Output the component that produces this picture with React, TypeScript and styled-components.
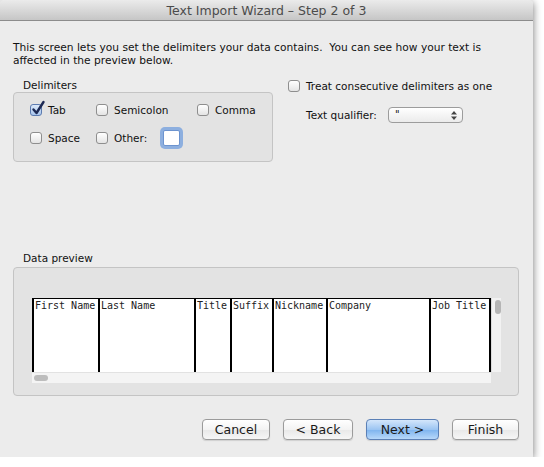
import React from 'react';
import styled, { createGlobalStyle } from 'styled-components';

const GlobalStyle = createGlobalStyle`
	html, body {
		margin: 0;
		padding: 0;
		background: #fff;
	}
	body {
		font-family: 'DejaVu Sans', 'Liberation Sans', sans-serif;
	}
`;

const Window = styled.div`
	width: 533px;
	height: 457px;
	background: #ececec;
	display: flex;
	flex-direction: column;
	box-shadow: 0 2px 9px rgba(0, 0, 0, 0.55);
	border-radius: 4px 4px 0 0;
	overflow: hidden;
`;

const TitleBar = styled.div`
	height: 20px;
	border-bottom: 1px solid #8c8c8c;
	background: linear-gradient(#ebebeb, #c6c6c6);
	display: flex;
	align-items: center;
	justify-content: center;
	font-size: 12.5px;
	color: #4b4b4b;
`;

const Body = styled.div`
	flex: 1;
	display: flex;
	flex-direction: column;
	padding: 20px 14px 17px 13px;
	font-size: 10.5px;
	color: #111;
`;

const Intro = styled.p`
	margin: 0;
	font-size: 10.65px;
	line-height: 13px;
	height: 26px;
`;

const TopRow = styled.div`
	display: flex;
	margin-top: 12px;
`;

const Group = styled.div`
	display: flex;
	flex-direction: column;
	width: 260px;
`;

const GroupLabel = styled.div`
	line-height: 13px;
	padding-left: 10px;
`;

const GroupBox = styled.div<{ $height: number }>`
	height: ${(p) => p.$height}px;
	box-sizing: border-box;
	background: #e3e3e3;
	border: 1px solid #c4c4c4;
	border-radius: 4px;
`;

const DelimiterGrid = styled.div`
	display: grid;
	grid-template-columns: 66px 101px auto;
	grid-template-rows: 22px 22px;
	row-gap: 6px;
	padding: 6px 0 0 16px;
`;

const Option = styled.label`
	display: flex;
	align-items: center;
	gap: 6px;
	white-space: nowrap;
`;

const Box = styled.span<{ $checked?: boolean }>`
	position: relative;
	width: 12px;
	height: 12px;
	box-sizing: border-box;
	flex: none;
	border: 1px solid ${(p) => (p.$checked ? '#5c7bb0' : '#8e8e8e')};
	border-radius: 3px;
	background: ${(p) =>
		p.$checked
			? 'linear-gradient(#dbe8f8, #a8c6ee)'
			: 'linear-gradient(#ffffff, #e4e4e4)'};
`;

const Tick = styled.svg`
	position: absolute;
	left: 0;
	top: -4px;
	width: 14px;
	height: 15px;
	overflow: visible;
`;

const OtherField = styled.span`
	width: 17px;
	height: 16px;
	box-sizing: border-box;
	margin-left: 10px;
	background: #fff;
	border: 1px solid #6d94cf;
	border-radius: 2px;
	box-shadow: 0 0 0 3px rgba(112, 158, 222, 0.75);
`;

const Options = styled.div`
	display: flex;
	flex-direction: column;
	padding: 1px 0 0 15px;
`;

const QualifierRow = styled.div`
	display: flex;
	align-items: center;
	gap: 11px;
	margin-top: 15px;
	padding-left: 18px;
`;

const Select = styled.div`
	width: 75px;
	height: 16px;
	box-sizing: border-box;
	border: 1px solid #9c9c9c;
	border-radius: 4px;
	background: linear-gradient(#ffffff, #ebebeb);
	display: flex;
	align-items: center;
	justify-content: space-between;
	padding: 0 5px 0 6px;
	font-size: 10px;
	line-height: 1;
`;

const Arrows = styled.svg`
	width: 6px;
	height: 9px;
`;

const PreviewLabel = styled(GroupLabel)`
	margin-top: 90px;
	margin-bottom: 2px;
`;

const PreviewBox = styled(GroupBox)`
	padding: 30px 0 0 18px;
`;

const Scroller = styled.div`
	display: grid;
	grid-template-columns: 459px 10px;
	grid-template-rows: 74px 11px;
`;

const Table = styled.div`
	display: flex;
	background: #fff;
	border-top: 1px solid #000;
	border-right: 2px solid #000;
	font-family: 'DejaVu Sans Mono', 'Liberation Mono', monospace;
	font-size: 10px;
	color: #222;
`;

const Column = styled.div<{ $width: number }>`
	width: ${(p) => p.$width}px;
	box-sizing: border-box;
	border-left: 2px solid #000;
	padding: 1px 0 0 1px;
	white-space: nowrap;
	overflow: hidden;
	line-height: 12px;
`;

const VScroll = styled.div`
	background: #f2f2f2;
	border-left: 1px solid #dcdcdc;
	padding: 2px 0 0 3px;
`;

const VThumb = styled.div`
	width: 6px;
	height: 14px;
	border-radius: 3px;
	background: #b5b5b5;
`;

const HScroll = styled.div`
	background: #f4f4f4;
	border-top: 1px solid #e2e2e2;
	padding: 2px 0 0 2px;
`;

const HThumb = styled.div`
	width: 14px;
	height: 6px;
	border-radius: 3px;
	background: #bdbdbd;
`;

const ButtonRow = styled.div`
	display: flex;
	justify-content: flex-end;
	gap: 13px;
	margin-top: 23px;
`;

const Button = styled.button<{ $width: number; $primary?: boolean }>`
	width: ${(p) => p.$width}px;
	height: 21px;
	padding: 0;
	border-radius: 4px;
	border: 1px solid ${(p) => (p.$primary ? '#5b80b6' : '#9b9b9b')};
	background: ${(p) =>
		p.$primary
			? 'linear-gradient(#d4e6fb, #9cc5f2 50%, #7db3ee 51%, #b7d8fa)'
			: 'linear-gradient(#ffffff, #f3f3f3 50%, #e8e8e8 51%, #f6f6f6)'};
	box-shadow: 0 1px 1px rgba(0, 0, 0, 0.12);
	font-family: 'DejaVu Sans', 'Liberation Sans', sans-serif;
	font-size: 12.5px;
	color: #1a1a1a;
`;

function Checkbox({ checked, label }: { checked?: boolean; label: string }) {
	return (
		<Option>
			<Box $checked={checked}>
				{checked && (
					<Tick viewBox="0 0 14 15">
						<path
							d="M2.5 8.5 L5.5 12 L12.5 1"
							fill="none"
							stroke="#1d2a55"
							strokeWidth="2.4"
							strokeLinecap="round"
							strokeLinejoin="round"
						/>
					</Tick>
				)}
			</Box>
			{label}
		</Option>
	);
}

const columns: [string, number][] = [
	['First Name', 66],
	['Last Name', 96],
	['Title', 36],
	['Suffix', 42],
	['Nickname', 54],
	['Company', 103],
	['Job Title', 60],
];

export default function App() {
	return (
		<>
			<GlobalStyle />
			<Window>
				<TitleBar>Text Import Wizard – Step 2 of 3</TitleBar>
				<Body>
					<Intro>
						This screen lets you set the delimiters your data contains.&nbsp; You can see
						how your text is affected in the preview below.
					</Intro>

					<TopRow>
						<Group>
							<GroupLabel>Delimiters</GroupLabel>
							<GroupBox $height={70}>
								<DelimiterGrid>
									<Checkbox checked label="Tab" />
									<Checkbox label="Semicolon" />
									<Checkbox label="Comma" />
									<Checkbox label="Space" />
									<Option>
										<Box />
										Other:
										<OtherField />
									</Option>
								</DelimiterGrid>
							</GroupBox>
						</Group>

						<Options>
							<Checkbox label="Treat consecutive delimiters as one" />
							<QualifierRow>
								Text qualifier:
								<Select>
									<span>"</span>
									<Arrows viewBox="0 0 6 9">
										<path d="M3 0 L6 3.5 H0 Z M3 9 L6 5.5 H0 Z" fill="#444" />
									</Arrows>
								</Select>
							</QualifierRow>
						</Options>
					</TopRow>

					<PreviewLabel>Data preview</PreviewLabel>
					<PreviewBox $height={129}>
						<Scroller>
							<Table>
								{columns.map(([name, width]) => (
									<Column key={name} $width={width}>
										{name}
									</Column>
								))}
							</Table>
							<VScroll>
								<VThumb />
							</VScroll>
							<HScroll>
								<HThumb />
							</HScroll>
						</Scroller>
					</PreviewBox>

					<ButtonRow>
						<Button $width={68}>Cancel</Button>
						<Button $width={70}>&lt; Back</Button>
						<Button $width={73} $primary>
							Next &gt;
						</Button>
						<Button $width={67}>Finish</Button>
					</ButtonRow>
				</Body>
			</Window>
		</>
	);
}
